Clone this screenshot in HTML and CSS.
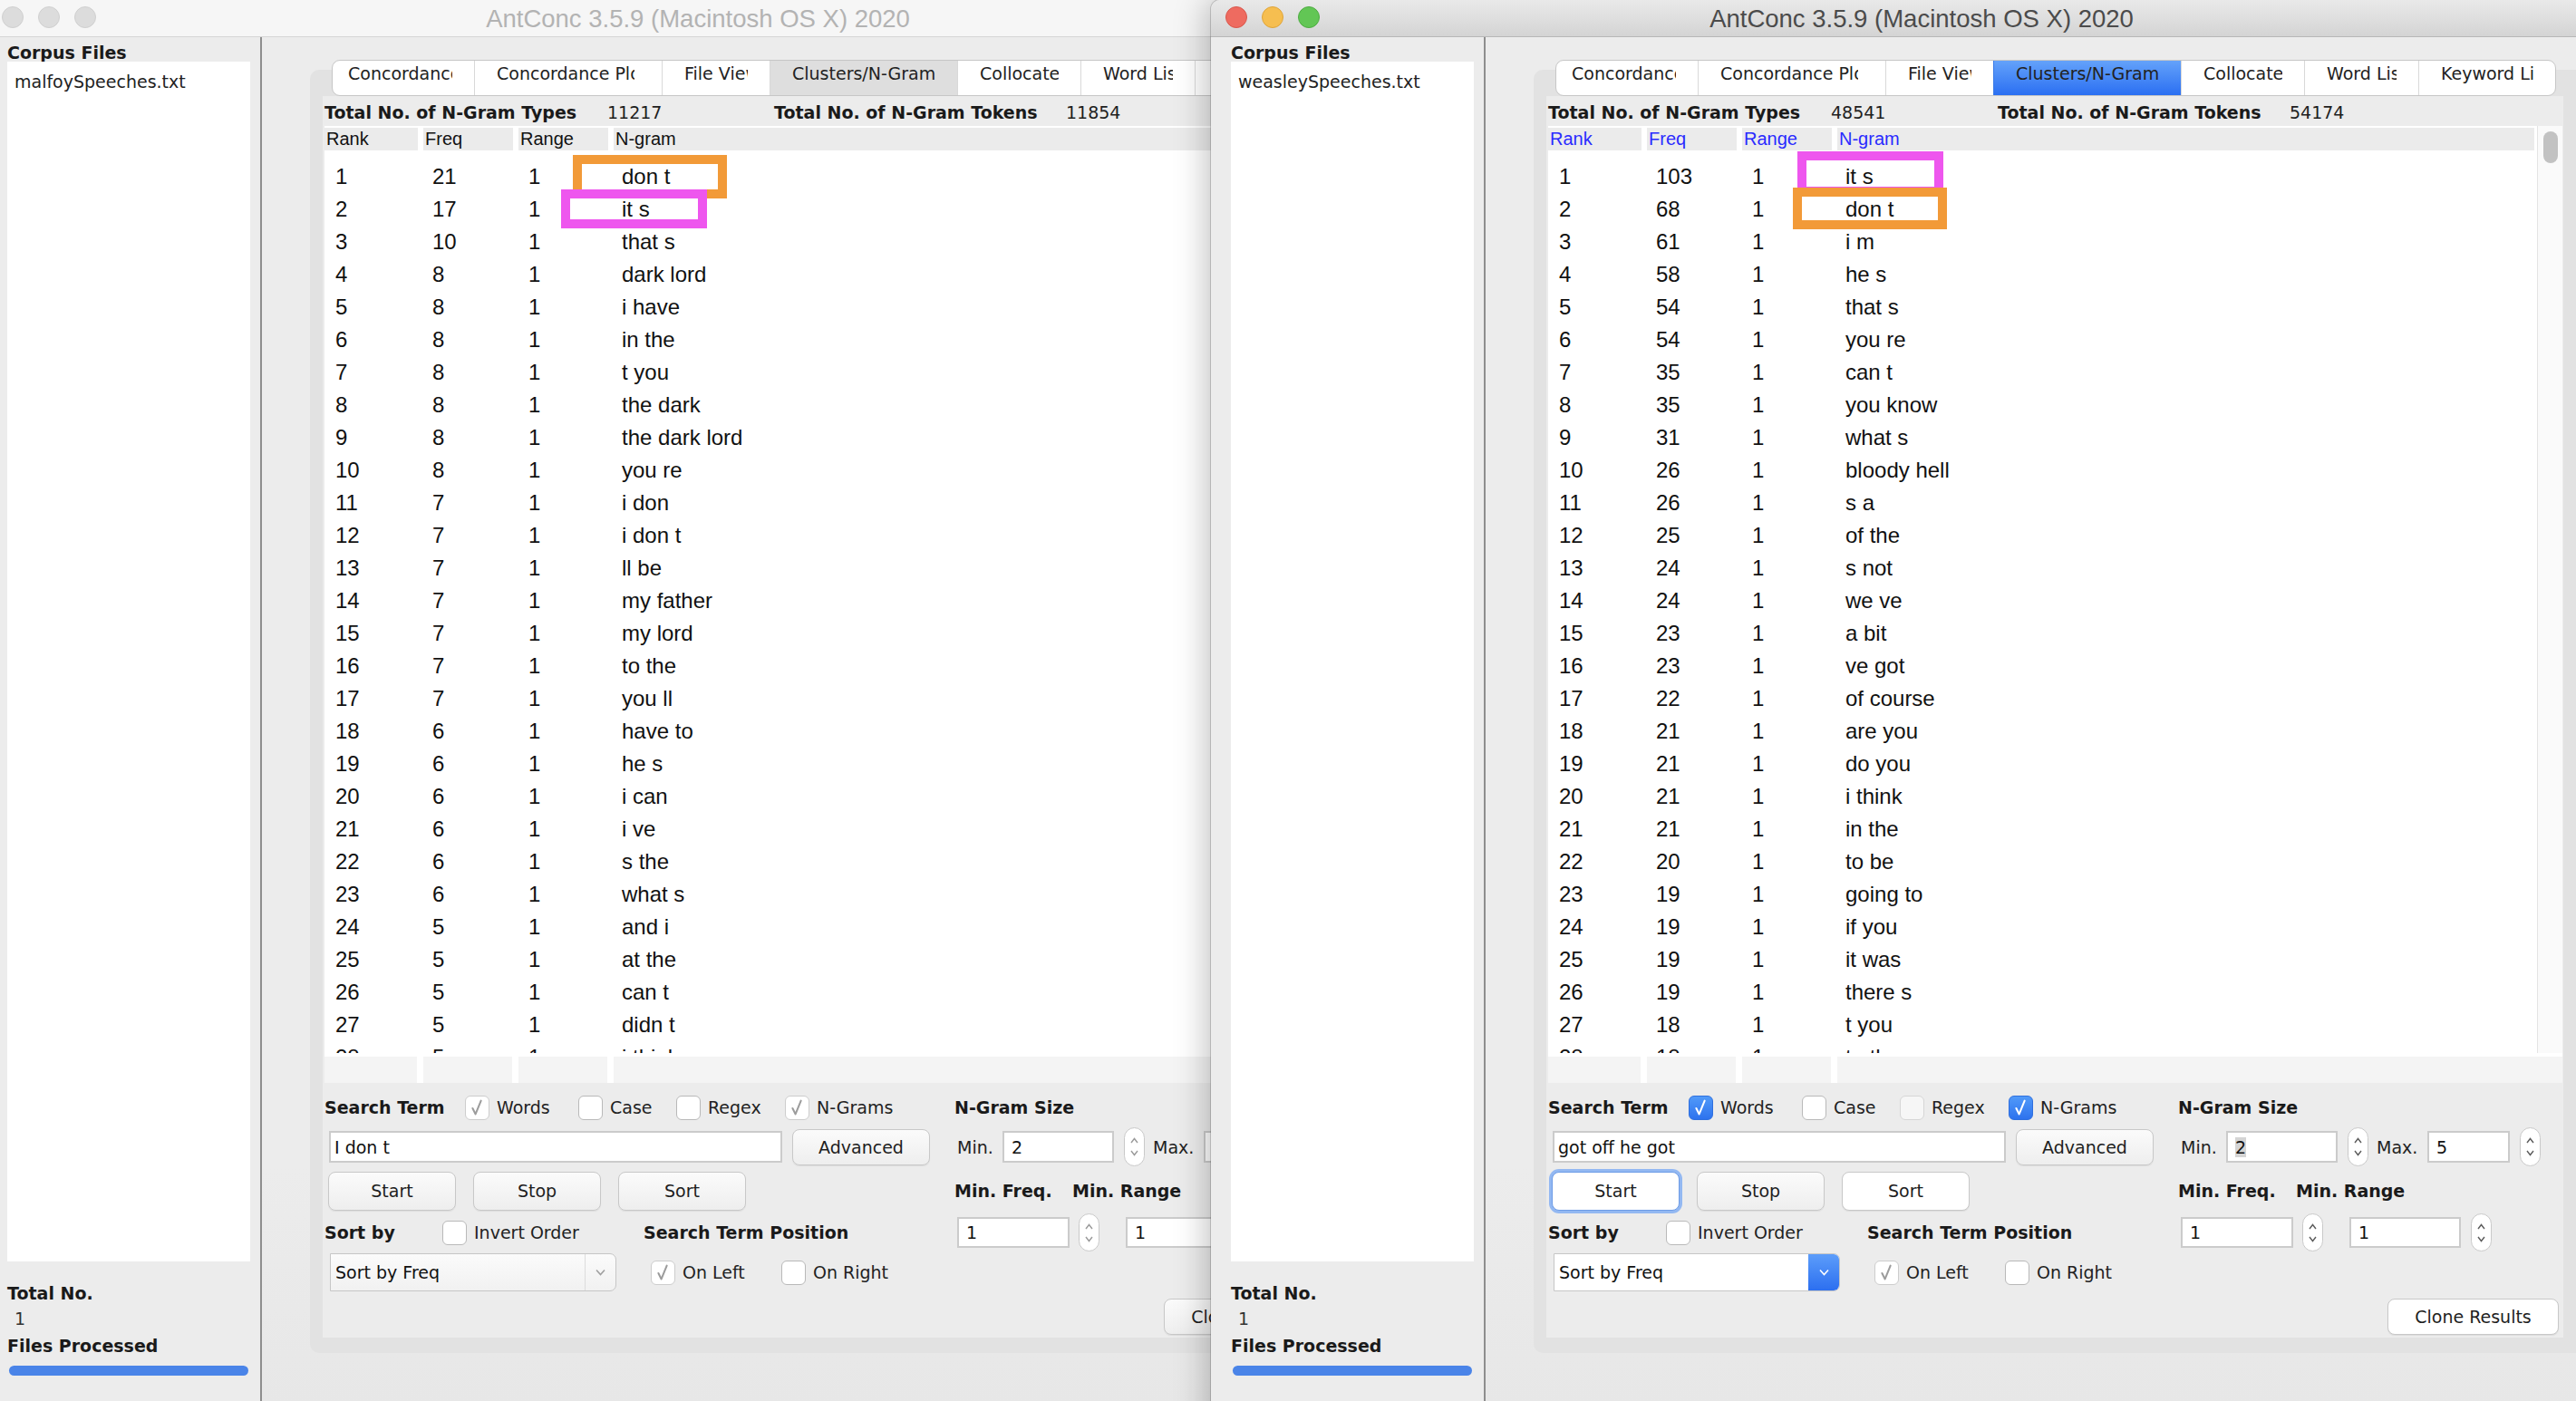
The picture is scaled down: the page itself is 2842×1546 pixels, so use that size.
FILE: index.html
```html
<!DOCTYPE html>
<html>
<head>
<meta charset="utf-8">
<title>AntConc</title>
<link rel="stylesheet" href="styles.css">
</head>
<body>

<!-- BACK WINDOW -->
<div class="window win-back">
  <div class="titlebar">
    <div class="lights"><span class="light"></span><span class="light"></span><span class="light"></span></div>
    <div class="title">AntConc 3.5.9 (Macintosh OS X) 2020</div>
    <div></div>
  </div>
  <div class="winbody">
    <div class="sidebar">
      <div class="sb-label">Corpus Files</div>
      <div class="filelist">malfoySpeeches.txt</div>
      <div class="sb-total">Total No.</div>
      <div class="sb-count">1</div>
      <div class="sb-proc">Files Processed</div>
      <div class="progress"></div>
    </div>
    <div class="divider"></div>
    <div class="main">
      <div class="outer">
        <div class="tabs">
          <div class="tab t1"><span>Concordance</span></div>
          <div class="tab t2"><span>Concordance Plot</span></div>
          <div class="tab t3"><span>File View</span></div>
          <div class="tab t4 sel"><span>Clusters/N-Grams</span></div>
          <div class="tab t5"><span>Collocates</span></div>
          <div class="tab t6"><span>Word List</span></div>
          <div class="tab t7"><span>Keyword List</span></div>
        </div>
        <div class="content">
          <div class="stats"><span class="st-l1">Total No. of N-Gram Types</span><span class="st-v1">11217</span><span class="st-l2">Total No. of N-Gram Tokens</span><span>11854</span></div>
          <div class="table">
            <div class="t-top">
              <div class="t-grid">
                <div class="thead"><span>Rank</span><span>Freq</span><span>Range</span><span>N-gram</span></div>
                <div class="tbody">
                  <div class="row"><span>1</span><span>21</span><span>1</span><span>don t</span></div>
                  <div class="row"><span>2</span><span>17</span><span>1</span><span>it s</span></div>
                  <div class="row"><span>3</span><span>10</span><span>1</span><span>that s</span></div>
                  <div class="row"><span>4</span><span>8</span><span>1</span><span>dark lord</span></div>
                  <div class="row"><span>5</span><span>8</span><span>1</span><span>i have</span></div>
                  <div class="row"><span>6</span><span>8</span><span>1</span><span>in the</span></div>
                  <div class="row"><span>7</span><span>8</span><span>1</span><span>t you</span></div>
                  <div class="row"><span>8</span><span>8</span><span>1</span><span>the dark</span></div>
                  <div class="row"><span>9</span><span>8</span><span>1</span><span>the dark lord</span></div>
                  <div class="row"><span>10</span><span>8</span><span>1</span><span>you re</span></div>
                  <div class="row"><span>11</span><span>7</span><span>1</span><span>i don</span></div>
                  <div class="row"><span>12</span><span>7</span><span>1</span><span>i don t</span></div>
                  <div class="row"><span>13</span><span>7</span><span>1</span><span>ll be</span></div>
                  <div class="row"><span>14</span><span>7</span><span>1</span><span>my father</span></div>
                  <div class="row"><span>15</span><span>7</span><span>1</span><span>my lord</span></div>
                  <div class="row"><span>16</span><span>7</span><span>1</span><span>to the</span></div>
                  <div class="row"><span>17</span><span>7</span><span>1</span><span>you ll</span></div>
                  <div class="row"><span>18</span><span>6</span><span>1</span><span>have to</span></div>
                  <div class="row"><span>19</span><span>6</span><span>1</span><span>he s</span></div>
                  <div class="row"><span>20</span><span>6</span><span>1</span><span>i can</span></div>
                  <div class="row"><span>21</span><span>6</span><span>1</span><span>i ve</span></div>
                  <div class="row"><span>22</span><span>6</span><span>1</span><span>s the</span></div>
                  <div class="row"><span>23</span><span>6</span><span>1</span><span>what s</span></div>
                  <div class="row"><span>24</span><span>5</span><span>1</span><span>and i</span></div>
                  <div class="row"><span>25</span><span>5</span><span>1</span><span>at the</span></div>
                  <div class="row"><span>26</span><span>5</span><span>1</span><span>can t</span></div>
                  <div class="row"><span>27</span><span>5</span><span>1</span><span>didn t</span></div>
                  <div class="row"><span>28</span><span>5</span><span>1</span><span>i think</span></div>
                </div>
              </div>
              <div class="vscroll"><div class="thumb"></div></div>
            </div>
            <div class="tfoot"><span></span><span></span><span></span><span></span></div>
          </div>
          <div class="controls">
            <div class="c">
              <span class="lbl-b w155">Search Term</span>
              <span class="chk w125"><span class="cb gray"><svg viewBox="0 0 27 27" width="27" height="27"><polyline points="8,14 11.5,21 18,5"/></svg></span><span class="cl">Words</span></span>
              <span class="chk w108"><span class="cb"></span><span class="cl">Case</span></span>
              <span class="chk w120"><span class="cb"></span><span class="cl">Regex</span></span>
              <span class="chk"><span class="cb gray"><svg viewBox="0 0 27 27" width="27" height="27"><polyline points="8,14 11.5,21 18,5"/></svg></span><span class="cl">N-Grams</span></span>
            </div>
            <div class="c"><span class="lbl-b">N-Gram Size</span></div>

            <div class="c">
              <span class="field textfield">I don t</span>
              <span class="btn adv">Advanced</span>
            </div>
            <div class="c">
              <span class="lbl min-l">Min.</span>
              <span class="field minf">2</span>
              <span class="spin"><svg viewBox="0 0 9 7" width="9" height="7"><polyline points="1,6 4.5,1.5 8,6"/></svg><svg viewBox="0 0 9 7" width="9" height="7"><polyline points="1,1 4.5,5.5 8,1"/></svg></span>
              <span class="lbl max-l">Max.</span>
              <span class="field maxf">5</span>
              <span class="spin"><svg viewBox="0 0 9 7" width="9" height="7"><polyline points="1,6 4.5,1.5 8,6"/></svg><svg viewBox="0 0 9 7" width="9" height="7"><polyline points="1,1 4.5,5.5 8,1"/></svg></span>
            </div>

            <div class="c">
              <span class="btn b141 first">Start</span>
              <span class="btn b141 next">Stop</span>
              <span class="btn b141 next">Sort</span>
            </div>
            <div class="c"><span class="lbl-b w130">Min. Freq.</span><span class="lbl-b">Min. Range</span></div>

            <div class="c">
              <span class="lbl-b w130">Sort by</span>
              <span class="cb"></span><span class="cl w187">Invert Order</span>
              <span class="lbl-b">Search Term Position</span>
            </div>
            <div class="c">
              <span class="field numf f1">1</span>
              <span class="spin s2"><svg viewBox="0 0 9 7" width="9" height="7"><polyline points="1,6 4.5,1.5 8,6"/></svg><svg viewBox="0 0 9 7" width="9" height="7"><polyline points="1,1 4.5,5.5 8,1"/></svg></span>
              <span class="field numf f2">1</span>
              <span class="spin s2 s3"><svg viewBox="0 0 9 7" width="9" height="7"><polyline points="1,6 4.5,1.5 8,6"/></svg><svg viewBox="0 0 9 7" width="9" height="7"><polyline points="1,1 4.5,5.5 8,1"/></svg></span>
            </div>

            <div class="c">
              <span class="combo"><span class="combo-text">Sort by Freq</span><span class="combo-arrow"><svg viewBox="0 0 11 8" width="11" height="8"><polyline points="1,1.5 5.5,6.5 10,1.5"/></svg></span></span>
              <span class="cb gray onleft"><svg viewBox="0 0 27 27" width="27" height="27"><polyline points="8,14 11.5,21 18,5"/></svg></span><span class="cl w109">On Left</span>
              <span class="cb"></span><span class="cl">On Right</span>
            </div>
            <div class="c"></div>

            <div class="c"></div>
            <div class="c c-end"><span class="btn clone">Clone Results</span></div>
          </div>
        </div>
      </div>
    </div>
  </div>
  <div class="mark orange bo"></div>
  <div class="mark magenta bm"></div>
</div>

<!-- FRONT WINDOW -->
<div class="window win-front">
  <div class="titlebar">
    <div class="lights"><span class="light red"></span><span class="light yellow"></span><span class="light green"></span></div>
    <div class="title">AntConc 3.5.9 (Macintosh OS X) 2020</div>
    <div></div>
  </div>
  <div class="winbody">
    <div class="sidebar">
      <div class="sb-label">Corpus Files</div>
      <div class="filelist">weasleySpeeches.txt</div>
      <div class="sb-total">Total No.</div>
      <div class="sb-count">1</div>
      <div class="sb-proc">Files Processed</div>
      <div class="progress"></div>
    </div>
    <div class="divider"></div>
    <div class="main">
      <div class="outer">
        <div class="tabs">
          <div class="tab t1"><span>Concordance</span></div>
          <div class="tab t2"><span>Concordance Plot</span></div>
          <div class="tab t3"><span>File View</span></div>
          <div class="tab t4 sel"><span>Clusters/N-Grams</span></div>
          <div class="tab t5"><span>Collocates</span></div>
          <div class="tab t6"><span>Word List</span></div>
          <div class="tab t7"><span>Keyword List</span></div>
        </div>
        <div class="content">
          <div class="stats"><span class="st-l1">Total No. of N-Gram Types</span><span class="st-v1">48541</span><span class="st-l2">Total No. of N-Gram Tokens</span><span>54174</span></div>
          <div class="table">
            <div class="t-top">
              <div class="t-grid">
                <div class="thead"><span>Rank</span><span>Freq</span><span>Range</span><span>N-gram</span></div>
                <div class="tbody">
                  <div class="row"><span>1</span><span>103</span><span>1</span><span>it s</span></div>
                  <div class="row"><span>2</span><span>68</span><span>1</span><span>don t</span></div>
                  <div class="row"><span>3</span><span>61</span><span>1</span><span>i m</span></div>
                  <div class="row"><span>4</span><span>58</span><span>1</span><span>he s</span></div>
                  <div class="row"><span>5</span><span>54</span><span>1</span><span>that s</span></div>
                  <div class="row"><span>6</span><span>54</span><span>1</span><span>you re</span></div>
                  <div class="row"><span>7</span><span>35</span><span>1</span><span>can t</span></div>
                  <div class="row"><span>8</span><span>35</span><span>1</span><span>you know</span></div>
                  <div class="row"><span>9</span><span>31</span><span>1</span><span>what s</span></div>
                  <div class="row"><span>10</span><span>26</span><span>1</span><span>bloody hell</span></div>
                  <div class="row"><span>11</span><span>26</span><span>1</span><span>s a</span></div>
                  <div class="row"><span>12</span><span>25</span><span>1</span><span>of the</span></div>
                  <div class="row"><span>13</span><span>24</span><span>1</span><span>s not</span></div>
                  <div class="row"><span>14</span><span>24</span><span>1</span><span>we ve</span></div>
                  <div class="row"><span>15</span><span>23</span><span>1</span><span>a bit</span></div>
                  <div class="row"><span>16</span><span>23</span><span>1</span><span>ve got</span></div>
                  <div class="row"><span>17</span><span>22</span><span>1</span><span>of course</span></div>
                  <div class="row"><span>18</span><span>21</span><span>1</span><span>are you</span></div>
                  <div class="row"><span>19</span><span>21</span><span>1</span><span>do you</span></div>
                  <div class="row"><span>20</span><span>21</span><span>1</span><span>i think</span></div>
                  <div class="row"><span>21</span><span>21</span><span>1</span><span>in the</span></div>
                  <div class="row"><span>22</span><span>20</span><span>1</span><span>to be</span></div>
                  <div class="row"><span>23</span><span>19</span><span>1</span><span>going to</span></div>
                  <div class="row"><span>24</span><span>19</span><span>1</span><span>if you</span></div>
                  <div class="row"><span>25</span><span>19</span><span>1</span><span>it was</span></div>
                  <div class="row"><span>26</span><span>19</span><span>1</span><span>there s</span></div>
                  <div class="row"><span>27</span><span>18</span><span>1</span><span>t you</span></div>
                  <div class="row"><span>28</span><span>18</span><span>1</span><span>to the</span></div>
                </div>
              </div>
              <div class="vscroll"><div class="thumb"></div></div>
            </div>
            <div class="tfoot"><span></span><span></span><span></span><span></span></div>
          </div>
          <div class="controls">
            <div class="c">
              <span class="lbl-b w155">Search Term</span>
              <span class="chk w125"><span class="cb on"><svg viewBox="0 0 27 27" width="27" height="27"><polyline points="8,14 11.5,21 18,5"/></svg></span><span class="cl">Words</span></span>
              <span class="chk w108"><span class="cb"></span><span class="cl">Case</span></span>
              <span class="chk w120"><span class="cb dis"></span><span class="cl">Regex</span></span>
              <span class="chk"><span class="cb on"><svg viewBox="0 0 27 27" width="27" height="27"><polyline points="8,14 11.5,21 18,5"/></svg></span><span class="cl">N-Grams</span></span>
            </div>
            <div class="c"><span class="lbl-b">N-Gram Size</span></div>

            <div class="c">
              <span class="field textfield">got off he got</span>
              <span class="btn adv">Advanced</span>
            </div>
            <div class="c">
              <span class="lbl min-l">Min.</span>
              <span class="field minf"><span class="selected">2</span></span>
              <span class="spin"><svg viewBox="0 0 9 7" width="9" height="7"><polyline points="1,6 4.5,1.5 8,6"/></svg><svg viewBox="0 0 9 7" width="9" height="7"><polyline points="1,1 4.5,5.5 8,1"/></svg></span>
              <span class="lbl max-l">Max.</span>
              <span class="field maxf">5</span>
              <span class="spin"><svg viewBox="0 0 9 7" width="9" height="7"><polyline points="1,6 4.5,1.5 8,6"/></svg><svg viewBox="0 0 9 7" width="9" height="7"><polyline points="1,1 4.5,5.5 8,1"/></svg></span>
            </div>

            <div class="c">
              <span class="btn b141 first focus">Start</span>
              <span class="btn b141 next">Stop</span>
              <span class="btn b141 next white">Sort</span>
            </div>
            <div class="c"><span class="lbl-b w130">Min. Freq.</span><span class="lbl-b">Min. Range</span></div>

            <div class="c">
              <span class="lbl-b w130">Sort by</span>
              <span class="cb"></span><span class="cl w187">Invert Order</span>
              <span class="lbl-b">Search Term Position</span>
            </div>
            <div class="c">
              <span class="field numf f1">1</span>
              <span class="spin s2"><svg viewBox="0 0 9 7" width="9" height="7"><polyline points="1,6 4.5,1.5 8,6"/></svg><svg viewBox="0 0 9 7" width="9" height="7"><polyline points="1,1 4.5,5.5 8,1"/></svg></span>
              <span class="field numf f2">1</span>
              <span class="spin s2 s3"><svg viewBox="0 0 9 7" width="9" height="7"><polyline points="1,6 4.5,1.5 8,6"/></svg><svg viewBox="0 0 9 7" width="9" height="7"><polyline points="1,1 4.5,5.5 8,1"/></svg></span>
            </div>

            <div class="c">
              <span class="combo"><span class="combo-text">Sort by Freq</span><span class="combo-arrow"><svg viewBox="0 0 11 8" width="11" height="8"><polyline points="1,1.5 5.5,6.5 10,1.5"/></svg></span></span>
              <span class="cb gray onleft"><svg viewBox="0 0 27 27" width="27" height="27"><polyline points="8,14 11.5,21 18,5"/></svg></span><span class="cl w109">On Left</span>
              <span class="cb"></span><span class="cl">On Right</span>
            </div>
            <div class="c"></div>

            <div class="c"></div>
            <div class="c c-end"><span class="btn clone white">Clone Results</span></div>
          </div>
        </div>
      </div>
    </div>
  </div>
  <div class="mark magenta fm"></div>
  <div class="mark orange fo"></div>
</div>

</body>
</html>
```

FILE: styles.css
```css
* { box-sizing: border-box; }
html, body {
  margin: 0;
  padding: 0;
  width: 2842px;
  height: 1546px;
  overflow: hidden;
}
body {
  position: relative;
  background: #cfcfcf;
  font-family: "DejaVu Sans", "Liberation Sans", sans-serif;
  font-size: 19px;
  color: #1e1e1e;
}

/* windows on the desktop */
.window {
  position: absolute;
  top: 0;
  width: 1568px;
  height: 1600px;
  background: #ececec;
  display: flex;
  flex-direction: column;
  border-radius: 10px 10px 0 0;
  overflow: hidden;
}
.win-back { left: -14px; z-index: 1; }
.win-front {
  left: 1336px;
  z-index: 2;
  box-shadow: 0 0 0 1px rgba(0,0,0,0.16), -4px 0 36px rgba(0,0,0,0.26);
}

/* title bar */
.titlebar {
  flex: none;
  height: 41px;
  display: grid;
  grid-template-columns: 1fr auto 1fr;
  align-items: center;
  border-bottom: 1px solid #d6d6d6;
}
.win-front .titlebar {
  background: linear-gradient(#e9e9e9, #d4d4d4);
  border-bottom-color: #b7b7b7;
}
.win-back .titlebar { background: #f6f6f6; }
.lights {
  display: flex;
  gap: 16px;
  padding-left: 16px;
  padding-bottom: 4px;
}
.light {
  width: 24px;
  height: 24px;
  border-radius: 50%;
  background: #dcdcdc;
  border: 1px solid #d0d0d0;
}
.light.red { background: #ee6b60; border-color: #d8574c; }
.light.yellow { background: #f6be50; border-color: #dea43a; }
.light.green { background: #62c655; border-color: #4eab42; }
.title {
  font-family: "Liberation Sans", sans-serif;
  font-size: 27.5px;
  line-height: 40px;
  padding-top: 1px;
  color: #4b4b4b;
}
.win-back .title { color: #b3b3b3; }

.winbody {
  flex: 1;
  display: flex;
  min-height: 0;
}

/* sidebar */
.sidebar {
  flex: none;
  width: 301px;
  padding: 5px 11px 0 22px;
  display: flex;
  flex-direction: column;
}
.sb-label, .sb-total, .sb-proc, .lbl-b, .stats .st-l1, .stats .st-l2 {
  font-weight: bold;
  color: #1a1a1a;
}
.sb-label { height: 22px; line-height: 24px; }
.filelist {
  flex: none;
  height: 1324px;
  background: #fff;
  padding: 9px 0 0 8px;
  line-height: 26px;
  color: #222;
}
.sb-total { margin-top: 22px; line-height: 26px; }
.sb-count { margin-top: 2px; line-height: 26px; padding-left: 8px; color: #333; }
.sb-proc { margin-top: 4px; line-height: 26px; }
.progress {
  margin: 9px 0 0 2px;
  width: 264px;
  height: 11px;
  border-radius: 6px;
  background: #4a84e8;
}
.divider { flex: none; width: 2px; background: #8e8e8e; }

/* main */
.main {
  flex: 1;
  padding: 36px 0 0 53px;
  background: linear-gradient(#ececec 80%, #e6e6e6);
}
.outer {
  width: 1164px;
  height: 1416px;
  background: #e2e2e2;
  border-radius: 10px;
  padding: 0 28px 17px 14px;
  display: flex;
  flex-direction: column;
}
.tabs {
  margin: -11px 0 0 10px;
  width: 1104px;
  height: 40px;
  flex: none;
  display: flex;
  background: #fff;
  border: 1px solid #c6c6c6;
  border-radius: 9px;
  overflow: hidden;
}
.tab {
  height: 100%;
  padding: 2px 24px 0 24px;
  border-left: 1px solid #d9d9d9;
  color: #222;
  white-space: nowrap;
}
.tab span { display: block; overflow: hidden; line-height: 24px; }
.tab.t1 { width: 156px; border-left: none; padding-left: 17px; }
.tab.t2 { width: 207px; padding-right: 30px; }
.tab.t3 { width: 119px; }
.tab.t4 { width: 207px; }
.tab.t5 { width: 136px; }
.tab.t6 { width: 126px; }
.tab.t7 { width: 152px; }
.win-front .tab.sel { background: linear-gradient(#64a2fa, #2b6ff2); border-left-color: #3a7be8; }
.win-back .tab.sel { background: #dedede; }

.content {
  flex: none;
  width: 1122px;
  height: 1370px;
  background: #ececec;
}
.stats {
  height: 33px;
  display: flex;
  align-items: center;
  padding-left: 2px;
  padding-top: 2px;
  white-space: nowrap;
}
.st-l1 { width: 312px; }
.st-v1 { width: 184px; }
.st-l2 { width: 322px; }

/* table */
.table {
  margin-left: 2px;
  width: 1119px;
  height: 1056px;
  background: #fff;
  font-family: "Liberation Sans", "DejaVu Sans", sans-serif;
}
.t-top { display: flex; height: 1023px; }
.t-grid { width: 1091px; padding-top: 2px; }
.thead, .row, .tfoot {
  display: grid;
  grid-template-columns: 109px 105px 105px 1fr;
}
.thead { height: 24px; }
.thead span {
  background: #ebebeb;
  margin-right: 6px;
  padding-left: 2px;
  font-size: 20px;
  line-height: 25px;
  color: #111;
}
.thead span:last-child { margin-right: 3px; }
.win-front .thead span { color: #2a2aff; }
.tbody {
  height: 997px;
  overflow: hidden;
  padding-top: 11px;
}
.row {
  height: 36px;
  font-size: 24px;
  line-height: 37px;
  color: #111;
  white-space: nowrap;
}
.row span:nth-child(1) { padding-left: 12px; }
.row span:nth-child(2) { padding-left: 10px; }
.row span:nth-child(3) { padding-left: 11px; }
.row span:nth-child(4) { padding-left: 9px; }
.vscroll {
  width: 28px;
  background: #fafafa;
  border-left: 1px solid #e4e4e4;
  padding: 6px 0 0 6px;
}
.thumb {
  width: 16px;
  height: 35px;
  border-radius: 8px;
  background: #c2c2c2;
}
.tfoot { margin-top: 4px; height: 29px; }
.tfoot span { background: #f4f4f4; margin-right: 7px; }
.tfoot span:last-child { margin-right: 0; }

/* controls */
.controls {
  display: grid;
  grid-template-columns: 695px 1fr;
  grid-template-rows: 38px 49px 48px 44px 44px 50px;
  height: 281px;
  padding: 8px 5px 0 2px;
}
.c {
  display: flex;
  align-items: center;
  white-space: nowrap;
}
.c-end { justify-content: flex-end; align-items: flex-end; padding-bottom: 3px; }
.w155 { width: 155px; flex: none; }
.w130 { width: 130px; flex: none; }
.w125 { width: 125px; }
.w108 { width: 108px; }
.w120 { width: 120px; }
.chk { display: flex; align-items: center; flex: none; }
.cl { margin-left: 8px; color: #222; }
.w187 { width: 187px; flex: none; }
.w109 { width: 109px; flex: none; }

.cb {
  flex: none;
  width: 27px;
  height: 27px;
  border-radius: 6px;
  border: 1px solid #b9b9b9;
  background: #fff;
  display: flex;
  align-items: center;
  justify-content: center;
}
.cb svg { display: block; }
.cb polyline { fill: none; stroke-width: 2.2; stroke-linecap: round; stroke-linejoin: round; }
.cb.on { background: linear-gradient(#519af9, #2d72ee); border-color: #2f6fde; }
.cb.on polyline { stroke: #fff; }
.cb.gray polyline { stroke: #9c9c9c; }
.cb.dis { background: #f6f6f6; border-color: #d6d6d6; }
.cb.gray { border-color: #cdcdcd; }
.onleft { margin-left: 38px; }

.field {
  flex: none;
  height: 35px;
  background: #fff;
  border: 2px solid #cbcbcb;
  display: flex;
  align-items: center;
  padding-left: 8px;
  color: #111;
}
.textfield { width: 500px; margin-left: 5px; padding-left: 4px; }
.minf { width: 123px; }
.maxf { width: 91px; }
.numf { width: 124px; height: 34px; }
.f1 { margin-left: 3px; }
.f2 { margin-left: 29px; width: 123px; }
.selected { background: #d4d4d4; }
.lbl { color: #222; flex: none; }
.min-l { margin-left: 3px; width: 50px; }
.max-l { margin-left: 9px; width: 56px; }

.spin {
  flex: none;
  width: 23px;
  height: 43px;
  margin-left: 11px;
  border: 1px solid #c9c9c9;
  border-radius: 12px;
  background: #fff;
  display: flex;
  flex-direction: column;
  align-items: center;
  justify-content: center;
  gap: 7px;
}
.spin svg { display: block; }
.spin polyline { fill: none; stroke: #5c5c5c; stroke-width: 1.4; }
.spin.s2 { height: 42px; margin-left: 10px; }
.spin.s3 { margin-left: 11px; }
.win-back .spin polyline { stroke: #9a9a9a; }

.btn {
  flex: none;
  display: flex;
  align-items: center;
  justify-content: center;
  height: 43px;
  border: 1px solid #c8c8c8;
  border-radius: 8px;
  background: linear-gradient(#fbfbfb, #eeeeee);
  box-shadow: 0 1px 1px rgba(0,0,0,0.07);
  color: #1e1e1e;
}
.btn.white { background: #fff; }
.btn.focus {
  background: #fff;
  border-color: #6d9ce6;
  box-shadow: 0 0 0 3px #93b8f2;
}
.adv { width: 152px; height: 40px; margin-left: 11px; }
.b141 { width: 141px; }
.first { margin-left: 4px; }
.next { margin-left: 19px; }
.clone { width: 189px; height: 40px; }

.combo {
  flex: none;
  display: flex;
  width: 316px;
  height: 42px;
  margin-left: 6px;
  border: 1px solid #c6c6c6;
  border-radius: 0 7px 7px 0;
  background: #fff;
  overflow: hidden;
}
.combo-text { flex: 1; padding-left: 5px; display: flex; align-items: center; color: #111; }
.combo-arrow {
  width: 34px;
  display: flex;
  align-items: center;
  justify-content: center;
}
.combo-arrow polyline { fill: none; stroke-width: 1.6; }
.win-front .combo-arrow { background: linear-gradient(#5c9dfa, #2c6ff0); }
.win-front .combo-arrow polyline { stroke: #fff; }
.win-back .combo { background: linear-gradient(#fbfbfb, #f1f1f1); }
.win-back .combo-arrow { border-left: 1px solid #dcdcdc; }
.win-back .combo-arrow polyline { stroke: #a0a0a0; }

/* annotation rectangles drawn over the tables */
.mark {
  position: absolute;
  border: 10px solid;
  z-index: 5;
}
.orange { border-color: #f29a38; }
.magenta { border-color: #ee56ee; }
.bo { left: 646px; top: 171px; width: 170px; height: 48px; }
.bm { left: 633px; top: 209px; width: 161px; height: 43px; }
.fm { left: 647px; top: 167px; width: 161px; height: 49px; }
.fo { left: 642px; top: 207px; width: 170px; height: 46px; }
```
